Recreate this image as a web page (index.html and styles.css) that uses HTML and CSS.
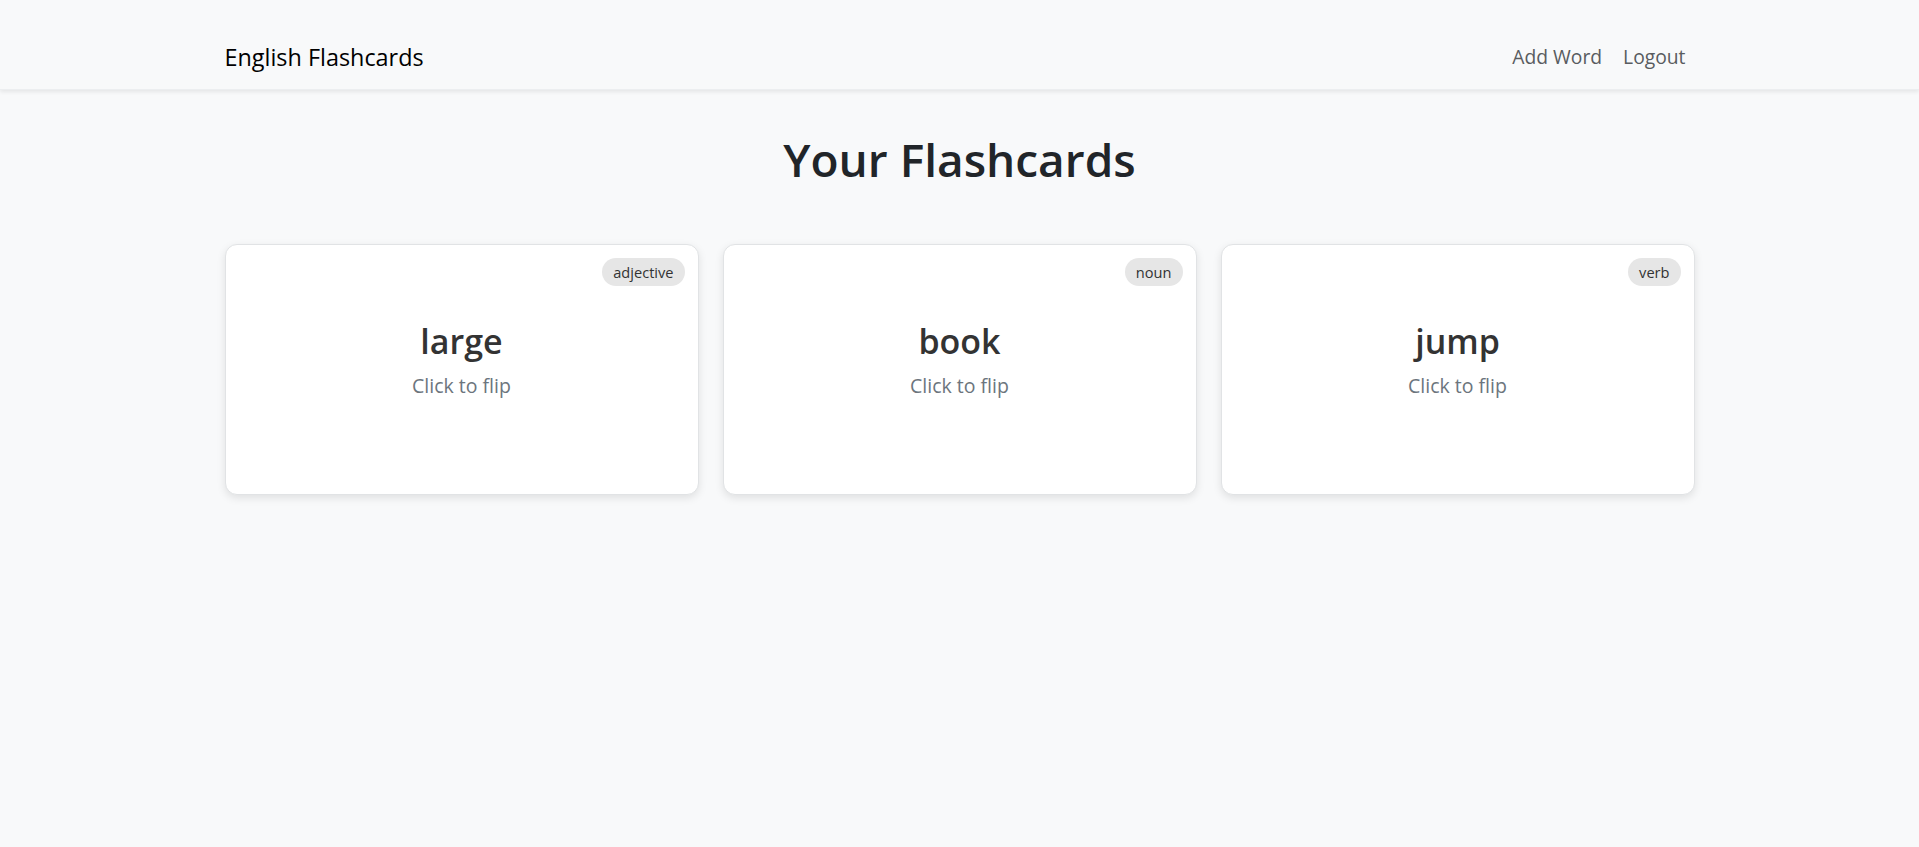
FILE: index.html
```html
<!DOCTYPE html>
<html lang="en">
<head>
<meta charset="utf-8">
<title>English Flashcards</title>
<link rel="stylesheet" href="styles.css">
</head>
<body>
<nav class="navbar">
  <div class="container nav-inner">
    <a class="brand" href="#">English Flashcards</a>
    <div class="nav-links">
      <a class="nav-link" href="#">Add Word</a>
      <a class="nav-link" href="#">Logout</a>
    </div>
  </div>
</nav>
<main class="container">
  <h1 class="page-title">Your Flashcards</h1>
  <div class="cards">
    <div class="card">
      <span class="badge">adjective</span>
      <h2 class="word">large</h2>
      <p class="hint">Click to flip</p>
    </div>
    <div class="card">
      <span class="badge">noun</span>
      <h2 class="word">book</h2>
      <p class="hint">Click to flip</p>
    </div>
    <div class="card">
      <span class="badge">verb</span>
      <h2 class="word">jump</h2>
      <p class="hint">Click to flip</p>
    </div>
  </div>
</main>
</body>
</html>
```
FILE: styles.css
```css
* { box-sizing: border-box; }
html, body { margin: 0; padding: 0; }
body {
  background: #f8f9fa;
  font-family: "Segoe UI", "Open Sans", "Noto Sans", sans-serif;
  color: #212529;
  min-height: 847px;
}
.container {
  max-width: 1500px;
  margin: 0 auto;
  padding: 0 15px;
}
.navbar {
  background: #f8f9fa;
  height: 90px;
  box-shadow: 0 2px 4px rgba(0,0,0,0.08);
  border-bottom: 1px solid #eceef0;
}
.nav-inner {
  display: flex;
  align-items: center;
  justify-content: space-between;
  height: 100%;
  padding-top: 24px;
}
.brand {
  font-size: 23.4px;
  color: #000;
  text-decoration: none;
}
.nav-links {
  display: flex;
  gap: 21px;
  margin-right: 9px;
}
.nav-link {
  font-size: 19.3px;
  color: #595c5f;
  text-decoration: none;
}
.page-title {
  text-align: center;
  font-size: 46px;
  font-weight: 600;
  margin: 42px 0 57px;
  line-height: 1.2;
  color: #212529;
}
.cards {
  display: grid;
  grid-template-columns: repeat(3, 1fr);
  gap: 24px;
}
.card {
  position: relative;
  background: #fff;
  border: 1px solid #e1e3e5;
  border-radius: 12px;
  box-shadow: 0 3px 8px rgba(0,0,0,0.1);
  height: 251px;
  display: flex;
  flex-direction: column;
  align-items: center;
  padding-top: 76px;
}
.badge {
  position: absolute;
  top: 13px;
  right: 13px;
  background: #e6e6e6;
  color: #333;
  font-size: 14.6px;
  padding: 4px 11px;
  border-radius: 14px;
  line-height: 20px;
}
.word {
  margin: 0;
  font-size: 34px;
  font-weight: 600;
  color: #333;
  line-height: 1.2;
}
.hint {
  margin: 9px 0 0;
  font-size: 19.5px;
  color: #6c757d;
  line-height: 1.5;
}
```
